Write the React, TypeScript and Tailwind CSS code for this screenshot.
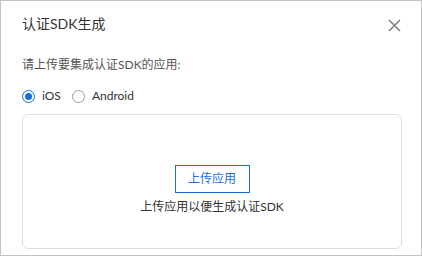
import React from "react";

export default function App() {
  const font = { fontFamily: 'Lato, "Noto Sans CJK SC", sans-serif' };
  return (
    <div
      className="w-[422px] h-[256px] border border-[#c4c4c4] bg-white flex flex-col pl-[21px] pr-[19px] pt-[13px] text-[#333]"
      style={font}
    >
      <div className="flex items-center justify-between h-[20px]">
        <div className="text-[14px] leading-[20px] text-[#333]">认证SDK生成</div>
        <button className="w-[14px] h-[14px] flex items-center justify-center mr-[1px] mt-[3px]">
          <svg width="13" height="13" viewBox="0 0 13 13">
            <path d="M1 1 L12 12 M12 1 L1 12" stroke="#7f7f7f" strokeWidth="1.5" />
          </svg>
        </button>
      </div>
      <div className="mt-[22px] text-[12px] leading-[18px] text-[#555]">请上传要集成认证SDK的应用:</div>
      <div className="mt-[14px] flex items-center h-[16px] text-[12px]">
        <label className="flex items-center gap-[7px]">
          <span className="w-[13px] h-[13px] rounded-full border-[1.5px] border-[#1a6fd6] flex items-center justify-center">
            <span className="w-[7px] h-[7px] rounded-full bg-[#1a6fd6]" />
          </span>
          <span className="text-[#333]">iOS</span>
        </label>
        <label className="flex items-center gap-[7px] ml-[11px]">
          <span className="w-[13px] h-[13px] rounded-full border border-[#999]" />
          <span className="text-[#333]">Android</span>
        </label>
      </div>
      <div className="mt-[10px] w-[380px] h-[135px] rounded-[6px] border border-[#dedede] flex flex-col items-center pt-[50px]">
        <button className="w-[75px] h-[28px] border-[1.5px] border-[#1a6fd6] text-[#1a6fd6] text-[12px] leading-[18px]">
          上传应用
        </button>
        <div className="mt-[5px] text-[12px] leading-[18px] text-[#333]">上传应用以便生成认证SDK</div>
      </div>
    </div>
  );
}
